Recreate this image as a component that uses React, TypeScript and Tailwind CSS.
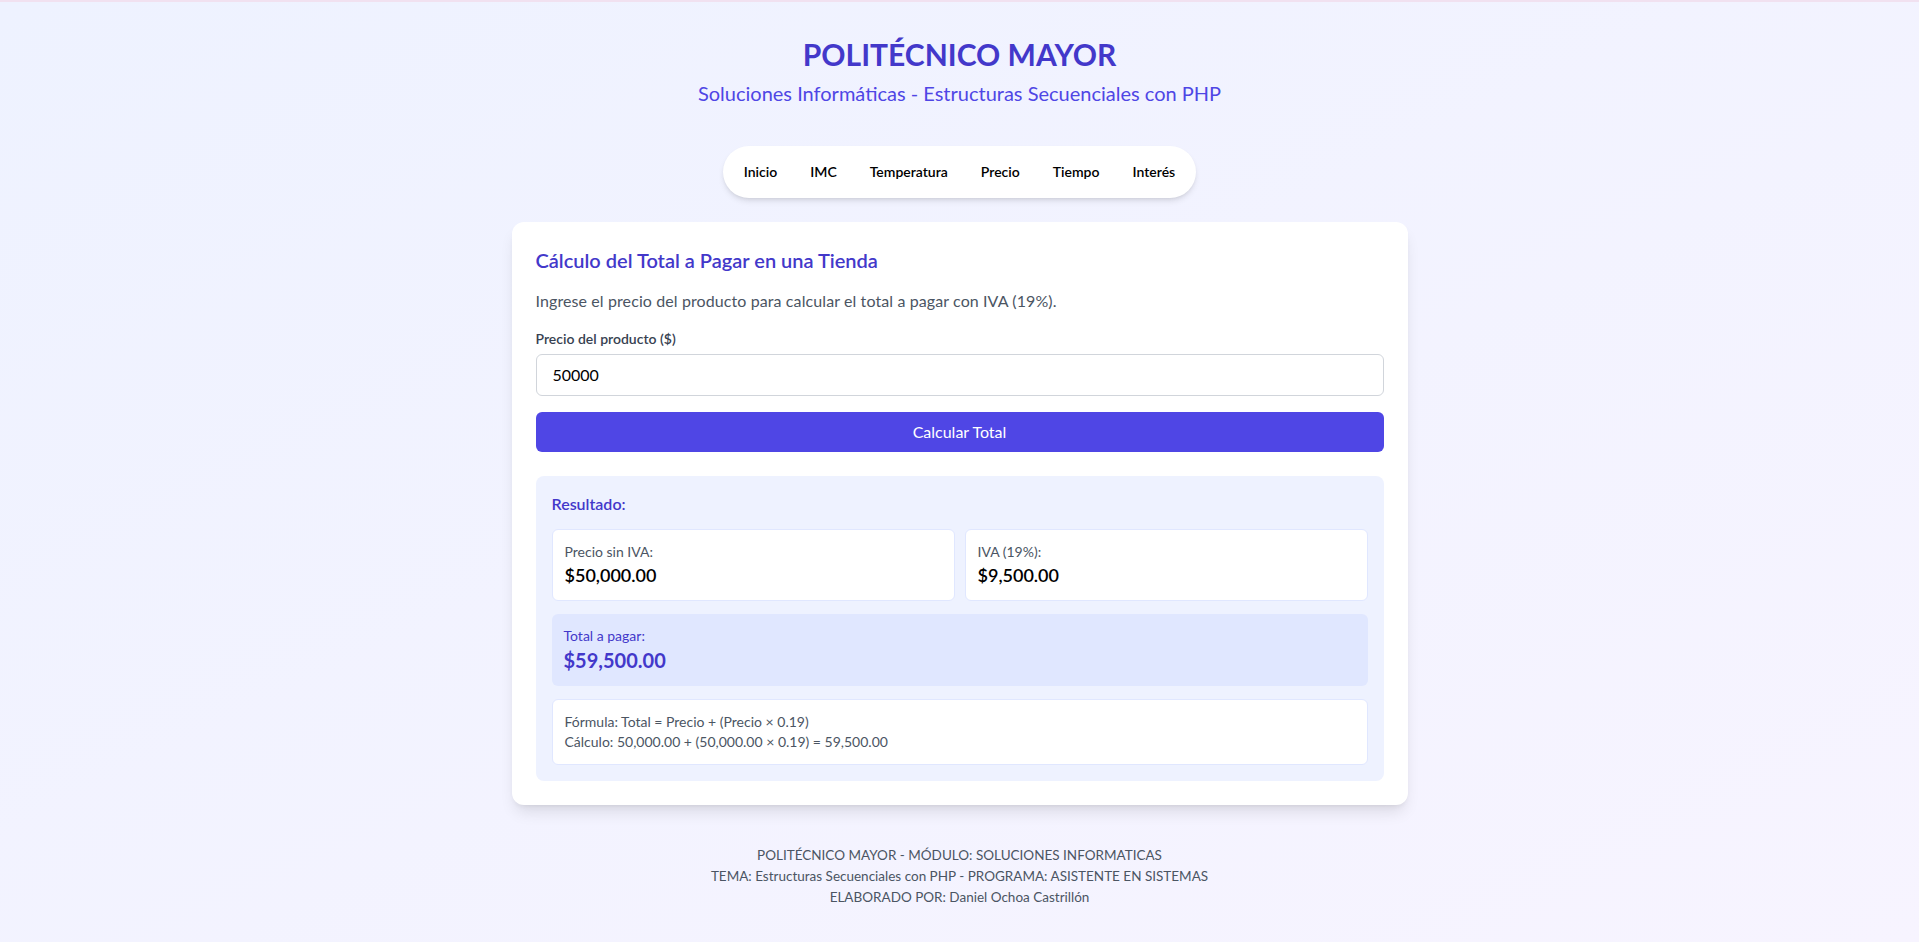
import React from "react";

export default function App() {
  const links = ["Inicio", "IMC", "Temperatura", "Precio", "Tiempo", "Interés"];
  return (
    <div
      className="min-h-screen border-t-2 border-[#f1e1f0] bg-linear-to-br from-[#eef2ff] to-[#f7f4ff] px-4 pt-[34px] pb-8"
      style={{ fontFamily: "Lato, 'Noto Sans', sans-serif" }}
    >
      <header className="text-center">
        <h1 className="text-[30px] leading-9 font-bold text-[#4338ca]">POLITÉCNICO MAYOR</h1>
        <p className="mt-[7px] text-xl leading-7 text-[#4f46e5]">
          Soluciones Informáticas - Estructuras Secuenciales con PHP
        </p>
      </header>

      <nav className="mt-[39px] flex justify-center">
        <ul className="flex rounded-full bg-white p-1 shadow-md">
          {links.map((l) => (
            <li key={l}>
              <a className="block px-[16.5px] py-3 text-sm leading-5 font-semibold text-black">{l}</a>
            </li>
          ))}
        </ul>
      </nav>

      <main className="mx-auto mt-6 max-w-4xl rounded-xl bg-white p-6 shadow-lg">
        <h2 className="text-xl leading-7 font-semibold text-[#4338ca]">Cálculo del Total a Pagar en una Tienda</h2>
        <p className="mt-[15px] text-base leading-6 tracking-[0.1px] text-[#4b5563]">
          Ingrese el precio del producto para calcular el total a pagar con IVA (19%).
        </p>
        <label className="mt-4 block text-sm leading-5 font-semibold text-[#374151]">Precio del producto ($)</label>
        <div className="mt-[5px] flex h-[42px] items-center rounded-md border border-[#d1d5db] px-4 text-base text-black">
          50000
        </div>
        <button className="mt-4 block h-10 w-full rounded-md bg-[#4f46e5] text-base text-white">Calcular Total</button>

        <section className="mt-6 rounded-lg bg-[#eef2ff] p-4">
          <h3 className="text-base leading-6 font-semibold text-[#4338ca]">Resultado:</h3>
          <div className="mt-[13px] grid grid-cols-2 gap-2.5">
            <div className="rounded-md border border-[#e0e7ff] bg-white p-3">
              <div className="text-sm leading-5 text-[#4b5563]">Precio sin IVA:</div>
              <div className="text-lg leading-[26px] font-semibold text-black">$50,000.00</div>
            </div>
            <div className="rounded-md border border-[#e0e7ff] bg-white p-3">
              <div className="text-sm leading-5 text-[#4b5563]">IVA (19%):</div>
              <div className="text-lg leading-[26px] font-semibold text-black">$9,500.00</div>
            </div>
          </div>
          <div className="mt-[13px] rounded-md bg-[#e0e7ff] p-3">
            <div className="text-sm leading-5 text-[#4338ca]">Total a pagar:</div>
            <div className="text-xl leading-7 font-bold text-[#4338ca]">$59,500.00</div>
          </div>
          <div className="mt-[13px] rounded-md border border-[#e0e7ff] bg-white p-3 text-sm leading-5 text-[#4b5563]">
            <div>Fórmula: Total = Precio + (Precio × 0.19)</div>
            <div>Cálculo: 50,000.00 + (50,000.00 × 0.19) = 59,500.00</div>
          </div>
        </section>
      </main>

      <footer className="mt-10 text-center text-[13.5px] leading-[21px] text-[#4b5563]">
        <p>POLITÉCNICO MAYOR - MÓDULO: SOLUCIONES INFORMATICAS</p>
        <p>TEMA: Estructuras Secuenciales con PHP - PROGRAMA: ASISTENTE EN SISTEMAS</p>
        <p>ELABORADO POR: Daniel Ochoa Castrillón</p>
      </footer>
    </div>
  );
}
